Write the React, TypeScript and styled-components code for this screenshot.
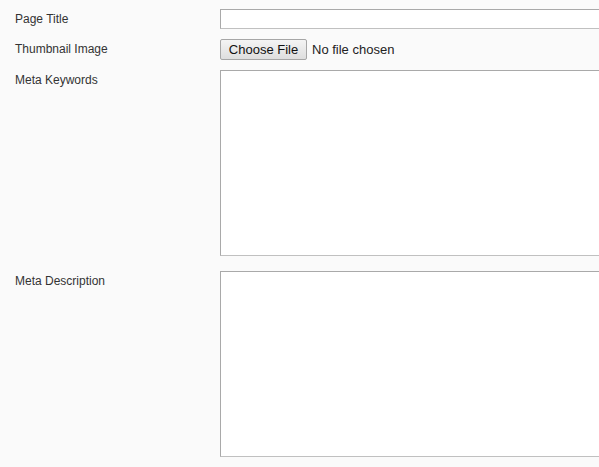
import styled, { createGlobalStyle } from 'styled-components'

const GlobalStyle = createGlobalStyle`
  html, body {
    margin: 0;
    padding: 0;
    background: #fafafa;
    overflow: hidden;
  }
  body {
    font-family: "Liberation Sans", Arial, sans-serif;
  }
`

const Form = styled.form`
  padding: 9px 0 0 15px;
`

const Row = styled.div<{ $gap: number }>`
  display: flex;
  align-items: flex-start;
  margin-bottom: ${p => p.$gap}px;
`

const Label = styled.label`
  flex: 0 0 205px;
  font-size: 12px;
  line-height: 20px;
  color: #333;
`

const TextInput = styled.input`
  box-sizing: border-box;
  flex: 0 0 420px;
  height: 20px;
  margin: 0;
  padding: 1px 2px;
  background: #fff;
  border: 1px solid;
  border-color: #a9a9a9 #c0c0c0 #c0c0c0 #a9a9a9;
  font: 13px "Liberation Sans", Arial, sans-serif;
`

const FilePicker = styled.div`
  display: flex;
  align-items: center;
  gap: 5px;
  font-size: 13px;
  color: #222;
`

const FileButton = styled.button`
  box-sizing: border-box;
  height: 21px;
  width: 87px;
  padding: 0;
  margin: 0;
  border: 1px solid #a6a6a6;
  border-radius: 2px;
  background: linear-gradient(#f4f4f4, #dedede);
  font: 13px "Liberation Sans", Arial, sans-serif;
  color: #111;
`

const TextArea = styled.textarea`
  box-sizing: border-box;
  flex: 0 0 420px;
  height: 186px;
  margin: 0;
  padding: 2px;
  resize: none;
  background: #fff;
  border: 1px solid;
  border-color: #a9a9a9 #c0c0c0 #c0c0c0 #a9a9a9;
  font: 13px "Liberation Sans", Arial, sans-serif;
`

export default function App() {
  return (
    <>
      <GlobalStyle />
      <Form>
        <Row $gap={10}>
          <Label>Page Title</Label>
          <TextInput type="text" />
        </Row>
        <Row $gap={10}>
          <Label>Thumbnail Image</Label>
          <FilePicker>
            <FileButton type="button">Choose File</FileButton>
            <span>No file chosen</span>
          </FilePicker>
        </Row>
        <Row $gap={15}>
          <Label>Meta Keywords</Label>
          <TextArea />
        </Row>
        <Row $gap={0}>
          <Label>Meta Description</Label>
          <TextArea />
        </Row>
      </Form>
    </>
  )
}
